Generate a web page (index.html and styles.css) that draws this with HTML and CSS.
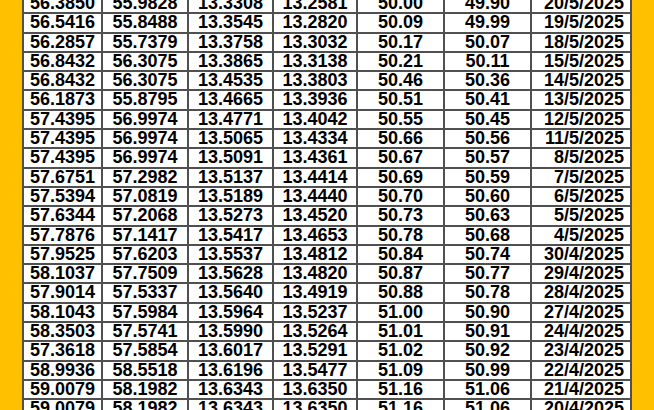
FILE: index.html
```html
<!DOCTYPE html>
<html lang="ar">
<head>
<meta charset="utf-8">
<link rel="stylesheet" href="styles.css">
<title>Rates</title>
</head>
<body>
<div class="frame">
  <table class="rates">
    <colgroup>
      <col class="c1"><col class="c2"><col class="c3"><col class="c4"><col class="c5"><col class="c6"><col class="c7">
    </colgroup>
    <tbody>
      <tr><td>56.3850</td><td>55.9828</td><td>13.3308</td><td>13.2581</td><td>50.00</td><td>49.90</td><td class="date">20/5/2025</td></tr>
      <tr><td>56.5416</td><td>55.8488</td><td>13.3545</td><td>13.2820</td><td>50.09</td><td>49.99</td><td class="date">19/5/2025</td></tr>
      <tr><td>56.2857</td><td>55.7379</td><td>13.3758</td><td>13.3032</td><td>50.17</td><td>50.07</td><td class="date">18/5/2025</td></tr>
      <tr><td>56.8432</td><td>56.3075</td><td>13.3865</td><td>13.3138</td><td>50.21</td><td>50.11</td><td class="date">15/5/2025</td></tr>
      <tr><td>56.8432</td><td>56.3075</td><td>13.4535</td><td>13.3803</td><td>50.46</td><td>50.36</td><td class="date">14/5/2025</td></tr>
      <tr><td>56.1873</td><td>55.8795</td><td>13.4665</td><td>13.3936</td><td>50.51</td><td>50.41</td><td class="date">13/5/2025</td></tr>
      <tr><td>57.4395</td><td>56.9974</td><td>13.4771</td><td>13.4042</td><td>50.55</td><td>50.45</td><td class="date">12/5/2025</td></tr>
      <tr><td>57.4395</td><td>56.9974</td><td>13.5065</td><td>13.4334</td><td>50.66</td><td>50.56</td><td class="date">11/5/2025</td></tr>
      <tr><td>57.4395</td><td>56.9974</td><td>13.5091</td><td>13.4361</td><td>50.67</td><td>50.57</td><td class="date">8/5/2025</td></tr>
      <tr><td>57.6751</td><td>57.2982</td><td>13.5137</td><td>13.4414</td><td>50.69</td><td>50.59</td><td class="date">7/5/2025</td></tr>
      <tr><td>57.5394</td><td>57.0819</td><td>13.5189</td><td>13.4440</td><td>50.70</td><td>50.60</td><td class="date">6/5/2025</td></tr>
      <tr><td>57.6344</td><td>57.2068</td><td>13.5273</td><td>13.4520</td><td>50.73</td><td>50.63</td><td class="date">5/5/2025</td></tr>
      <tr><td>57.7876</td><td>57.1417</td><td>13.5417</td><td>13.4653</td><td>50.78</td><td>50.68</td><td class="date">4/5/2025</td></tr>
      <tr><td>57.9525</td><td>57.6203</td><td>13.5537</td><td>13.4812</td><td>50.84</td><td>50.74</td><td class="date">30/4/2025</td></tr>
      <tr><td>58.1037</td><td>57.7509</td><td>13.5628</td><td>13.4820</td><td>50.87</td><td>50.77</td><td class="date">29/4/2025</td></tr>
      <tr><td>57.9014</td><td>57.5337</td><td>13.5640</td><td>13.4919</td><td>50.88</td><td>50.78</td><td class="date">28/4/2025</td></tr>
      <tr><td>58.1043</td><td>57.5984</td><td>13.5964</td><td>13.5237</td><td>51.00</td><td>50.90</td><td class="date">27/4/2025</td></tr>
      <tr><td>58.3503</td><td>57.5741</td><td>13.5990</td><td>13.5264</td><td>51.01</td><td>50.91</td><td class="date">24/4/2025</td></tr>
      <tr><td>57.3618</td><td>57.5854</td><td>13.6017</td><td>13.5291</td><td>51.02</td><td>50.92</td><td class="date">23/4/2025</td></tr>
      <tr><td>58.9936</td><td>58.5518</td><td>13.6196</td><td>13.5477</td><td>51.09</td><td>50.99</td><td class="date">22/4/2025</td></tr>
      <tr><td>59.0079</td><td>58.1982</td><td>13.6343</td><td>13.6350</td><td>51.16</td><td>51.06</td><td class="date">21/4/2025</td></tr>
      <tr><td>59.0079</td><td>58.1982</td><td>13.6343</td><td>13.6350</td><td>51.16</td><td>51.06</td><td class="date">20/4/2025</td></tr>
    </tbody>
  </table>
</div>
</body>
</html>
```
FILE: styles.css
```css
html, body {
  margin: 0;
  padding: 0;
  background: #FFC000;
  overflow: hidden;
}
.frame {
  width: 654px;
  height: 410px;
  overflow: hidden;
  padding-left: 22px;
  box-sizing: border-box;
}
.rates {
  margin-top: -7px;
  table-layout: fixed;
  border-collapse: separate;
  border-spacing: 2px;
  background: #505050;
  width: 610px;
  font-family: "Liberation Sans", Arial, sans-serif;
  font-weight: bold;
  font-size: 18px;
  color: #000;
}
.c1 { width: 77px; }
.c2 { width: 84px; }
.c3 { width: 83px; }
.c4 { width: 82px; }
.c5 { width: 85px; }
.c6 { width: 85px; }
.c7 { width: 98px; }
.rates td {
  background: #fff;
  padding: 0;
  height: 17.3px;
  line-height: 17.3px;
  text-align: center;
  white-space: nowrap;
  overflow: hidden;
}
.rates td.date {
  text-align: right;
  padding-right: 6px;
}
```
